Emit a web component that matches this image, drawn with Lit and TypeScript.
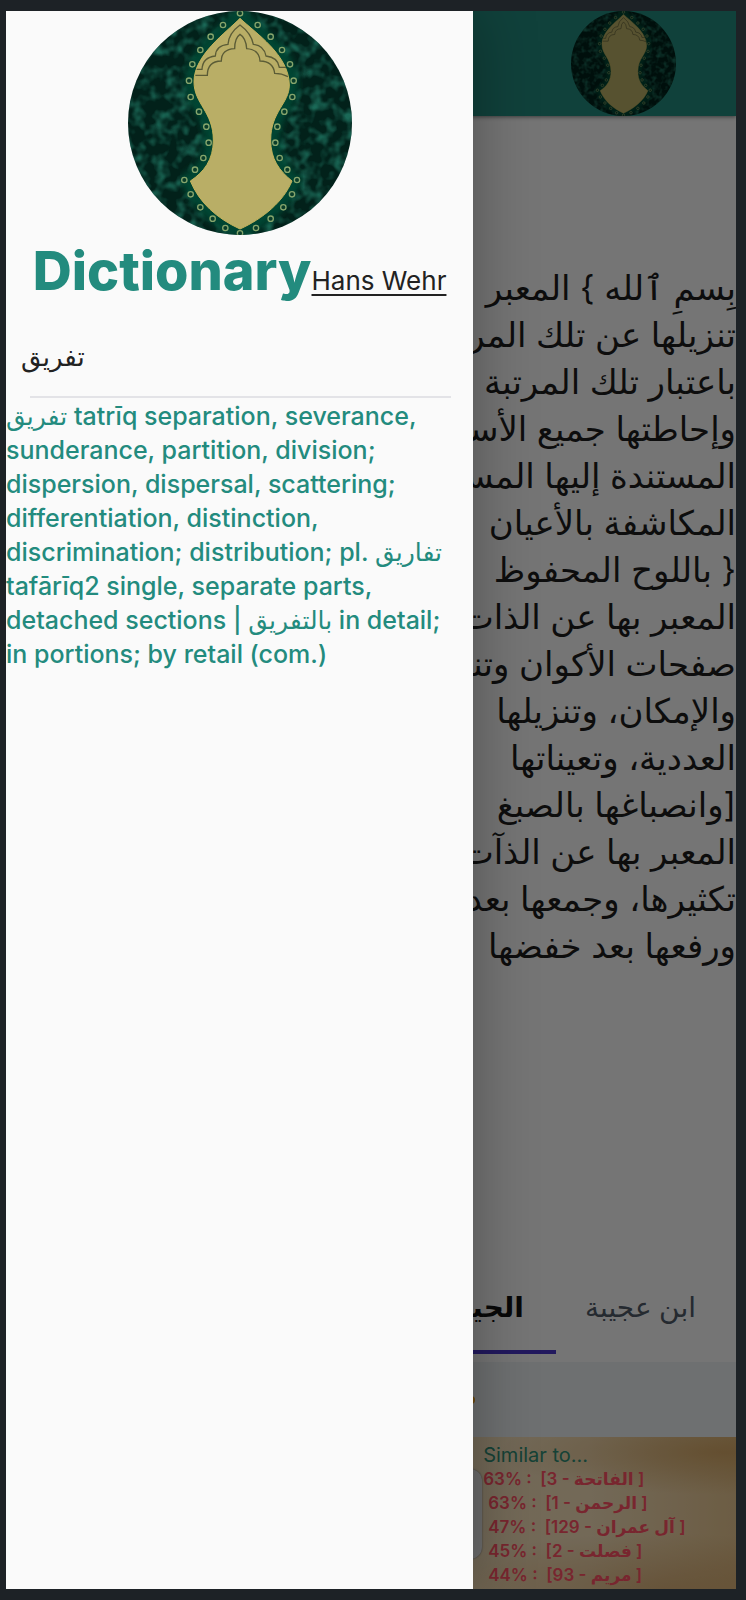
import { LitElement, html, css, svg } from "lit";
import { customElement } from "lit/decorators.js";

const RINGS: [number, number][] = [
  [720, 40], [669, 75], [632, 110], [601, 150], [577, 193], [567, 242], [572, 291], [597, 335], [619, 380],
  [626, 428], [610, 474], [585, 509], [553, 540], [572, 583], [601, 622], [638, 656], [676, 684], [720, 700],
  [773, 75], [812, 110], [846, 150], [870, 193], [881, 242], [877, 291], [853, 335], [832, 380],
  [826, 428], [839, 474], [862, 509], [891, 540], [876, 583], [850, 622], [812, 656], [768, 684],
];

const SOLE =
  "M720 55 C765 98 868 165 868 255 C868 310 812 335 812 420 C812 478 838 512 876 543 C850 605 790 655 720 687 C650 655 598 608 571 543 C612 516 640 480 640 420 C640 335 582 312 582 245 C582 165 678 98 720 55Z";

const PASSAGE = [
  "بِسمِ ٱلله } المعبر",
  "تنزيلها عن تلك المرتبة",
  "باعتبار تلك المرتبة",
  "وإحاطتها جميع الأسماء",
  "المستندة إليها المسماة",
  "المكاشفة بالأعيان",
  "{ باللوح المحفوظ",
  "المعبر بها عن الذات",
  "صفحات الأكوان وتنزلها",
  "والإمكان، وتنزيلها",
  "العددية، وتعيناتها",
  "[وانصباغها بالصبغ",
  "المعبر بها عن الذآت",
  "تكثيرها، وجمعها بعد",
  "ورفعها بعد خفضها",
];

const DEFINITION = [
  "تفريق tatrīq separation, severance,",
  "sunderance, partition, division;",
  "dispersion, dispersal, scattering;",
  "differentiation, distinction,",
  "discrimination; distribution; pl. تفاريق",
  "tafārīq2 single, separate parts,",
  "detached sections | بالتفريق in detail;",
  "in portions; by retail (com.)",
];

const SIMILAR = [
  { score: 63, verse: 3, surah: "الفاتحة" },
  { score: 63, verse: 1, surah: "الرحمن" },
  { score: 47, verse: 129, surah: "آل عمران" },
  { score: 45, verse: 2, surah: "فصلت" },
  { score: 44, verse: 93, surah: "مريم" },
];

@customElement("sandal-logo")
export class SandalLogo extends LitElement {
  static styles = css`
    :host { display: block; }
    svg { display: block; width: 100%; height: 100%; }
  `;

  render() {
    return html`
      <svg viewBox="384 33 672 672" role="img" aria-label="Logo">
        <defs>
          <clipPath id="disc"><circle cx="720" cy="369" r="336" /></clipPath>
          <filter id="damask" x="0" y="0" width="100%" height="100%">
            <feTurbulence type="fractalNoise" baseFrequency="0.03" numOctaves="2" seed="4" />
            <feColorMatrix values="0 0 0 0 0.02  0 0 0 0 0.25  0 0 0 0 0.17  2.4 0 0 0 -1" />
          </filter>
          <filter id="glow"><feGaussianBlur stdDeviation="9" /></filter>
        </defs>
        <g clip-path="url(#disc)">
          <rect x="384" y="33" width="672" height="672" fill="#02211a" />
          <rect x="384" y="33" width="672" height="672" filter="url(#damask)" opacity="0.7" />
          <path d=${SOLE} fill="none" stroke="#064430" stroke-width="56" filter="url(#glow)" />
          <path d=${SOLE} fill="#b9ae66" stroke="#c4b45c" stroke-width="3" />
          <g fill="none" stroke="#5b5c36" stroke-width="4">
            <path d="M590 208H606Q608 172 646 168Q648 136 684 133Q686 100 720 75Q754 100 760 133Q792 136 798 168Q834 172 838 202H858" />
            <path d="M586 226H622Q622 184 664 183Q664 148 704 146Q704 114 720 103Q738 114 740 146Q778 148 780 183Q820 184 824 220Q845 220 864 230" />
          </g>
          <g fill="#0a3d2a" stroke="#86a56c" stroke-width="4">
            ${RINGS.map(([x, y]) => svg`<circle cx=${x} cy=${y} r="8" />`)}
          </g>
        </g>
      </svg>
    `;
  }
}

@customElement("app-root")
export class AppRoot extends LitElement {
  static styles = css`
    :host {
      display: block;
      box-sizing: border-box;
      min-height: 100vh;
      padding: 11px 10px 11px 6px;
      background: #1d2226;
      font-family: Inter, "DejaVu Sans", sans-serif;
      display: flex;
    }
    .screen {
      position: relative;
      flex: 1;
      min-width: 0;
      display: flex;
      flex-direction: column;
      overflow: hidden;
      background: #f9f9f9;
    }
    .topbar {
      display: flex;
      justify-content: flex-end;
      padding-right: 60px;
      background: #238b7e;
      box-shadow: 0 1px 4px rgba(0, 0, 0, 0.5);
    }
    .topbar sandal-logo { width: 105px; height: 105px; }
    .passage {
      flex: 1;
      padding-top: 148px;
      font-size: 34px;
      line-height: 47px;
      color: #1d1d1d;
    }
    .passage p { margin: 0; }
    .line { display: block; white-space: nowrap; }
    .tabs { display: flex; height: 98px; }
    .tab {
      border: 0;
      border-bottom: 4px solid transparent;
      margin: 0 0 8px;
      background: none;
      font: 500 28px/34px Inter, "DejaVu Sans", sans-serif;
      color: #4f5a66;
      padding: 0 40px 0 29px;
      white-space: nowrap;
    }
    .tab.active {
      font-weight: 700;
      color: #111;
      padding: 0 32px;
      border-color: #4a35c8;
    }
    .tools {
      display: flex;
      align-items: center;
      height: 75px;
      background: #e9edf1;
    }
    .marker {
      width: 12px;
      height: 8px;
      margin-left: 457px;
      border-radius: 4px;
      background: #e59a1c;
    }
    .related {
      display: flex;
      gap: 1px;
      height: 152px;
      color: #ff5264;
      background:
        radial-gradient(ellipse at 98% 10%, rgba(190, 130, 50, 0.45), transparent 22%),
        radial-gradient(ellipse at 90% 100%, rgba(190, 130, 60, 0.4), transparent 26%),
        linear-gradient(90deg, #f3dfbc, #f4dfba 80%, #e6c590);
    }
    .card {
      width: 64%;
      flex: none;
      box-sizing: content-box;
      margin: 32px 0 30px;
      padding-right: 9px;
      border-radius: 12px;
      background: #e8e8e8;
      box-shadow: 0 0 2px #777;
    }
    h2 {
      margin: 0;
      padding-top: 6px;
      font-size: 20px;
      line-height: 24px;
      font-weight: 400;
      color: #2f8c74;
    }
    ul { margin: 0; padding: 0; list-style: none; }
    li {
      padding-left: 5px;
      font-size: 17px;
      line-height: 24px;
      font-weight: 600;
      white-space: pre;
    }
    li:first-child { padding-left: 0; }
    .backdrop {
      position: absolute;
      inset: 0;
      background: rgba(0, 0, 0, 0.53);
    }
    .drawer {
      position: absolute;
      inset: 0 auto 0 0;
      width: 64%;
      box-sizing: border-box;
      background: #fafafa;
      box-shadow: 0 0 60px rgba(0, 0, 0, 0.32);
      color: #238b7e;
    }
    .drawer sandal-logo { width: 224px; height: 224px; margin: 0 auto; }
    .heading {
      display: flex;
      align-items: baseline;
      justify-content: center;
      margin-top: 4px;
    }
    h1 { margin: 0; font-size: 54px; line-height: 64px; font-weight: 800; }
    .source {
      font-size: 26px;
      line-height: 32px;
      color: #222;
      text-underline-offset: 4px;
      text-decoration-thickness: 2px;
    }
    .word {
      margin: 0;
      padding: 38px 15px 0;
      font-size: 26px;
      line-height: 32px;
      font-weight: 500;
      color: #222;
    }
    hr {
      margin: 23px 22px 0 24px;
      border: 0;
      height: 2px;
      background: #e3e3e7;
    }
    .definition {
      margin: 0;
      padding-top: 1px;
      font-size: 25px;
      line-height: 34px;
      font-weight: 500;
    }
  `;

  render() {
    return html`
      <div class="screen">
        <header class="topbar"><sandal-logo></sandal-logo></header>
        <main class="passage" dir="rtl" lang="ar">
          <p>${PASSAGE.map((t) => html`<span class="line">${t}</span>`)}</p>
        </main>
        <nav class="tabs" dir="rtl" lang="ar">
          <button class="tab" type="button">ابن عجيبة</button>
          <button class="tab active" type="button">الجيلاني</button>
        </nav>
        <div class="tools"><span class="marker"></span></div>
        <section class="related">
          <div class="card"></div>
          <div>
            <h2>Similar to...</h2>
            <ul>
              ${SIMILAR.map((s) => html`<li>${`${s.score}% :  [${s.verse} - ${s.surah} ]`}</li>`)}
            </ul>
          </div>
        </section>
        <div class="backdrop"></div>
        <aside class="drawer">
          <sandal-logo></sandal-logo>
          <div class="heading">
            <h1>Dictionary</h1>
            <a class="source" href="#hans-wehr">Hans Wehr</a>
          </div>
          <p class="word" lang="ar">تفريق</p>
          <hr />
          <p class="definition">${DEFINITION.map((t) => html`<span class="line">${t}</span>`)}</p>
        </aside>
      </div>
    `;
  }
}
